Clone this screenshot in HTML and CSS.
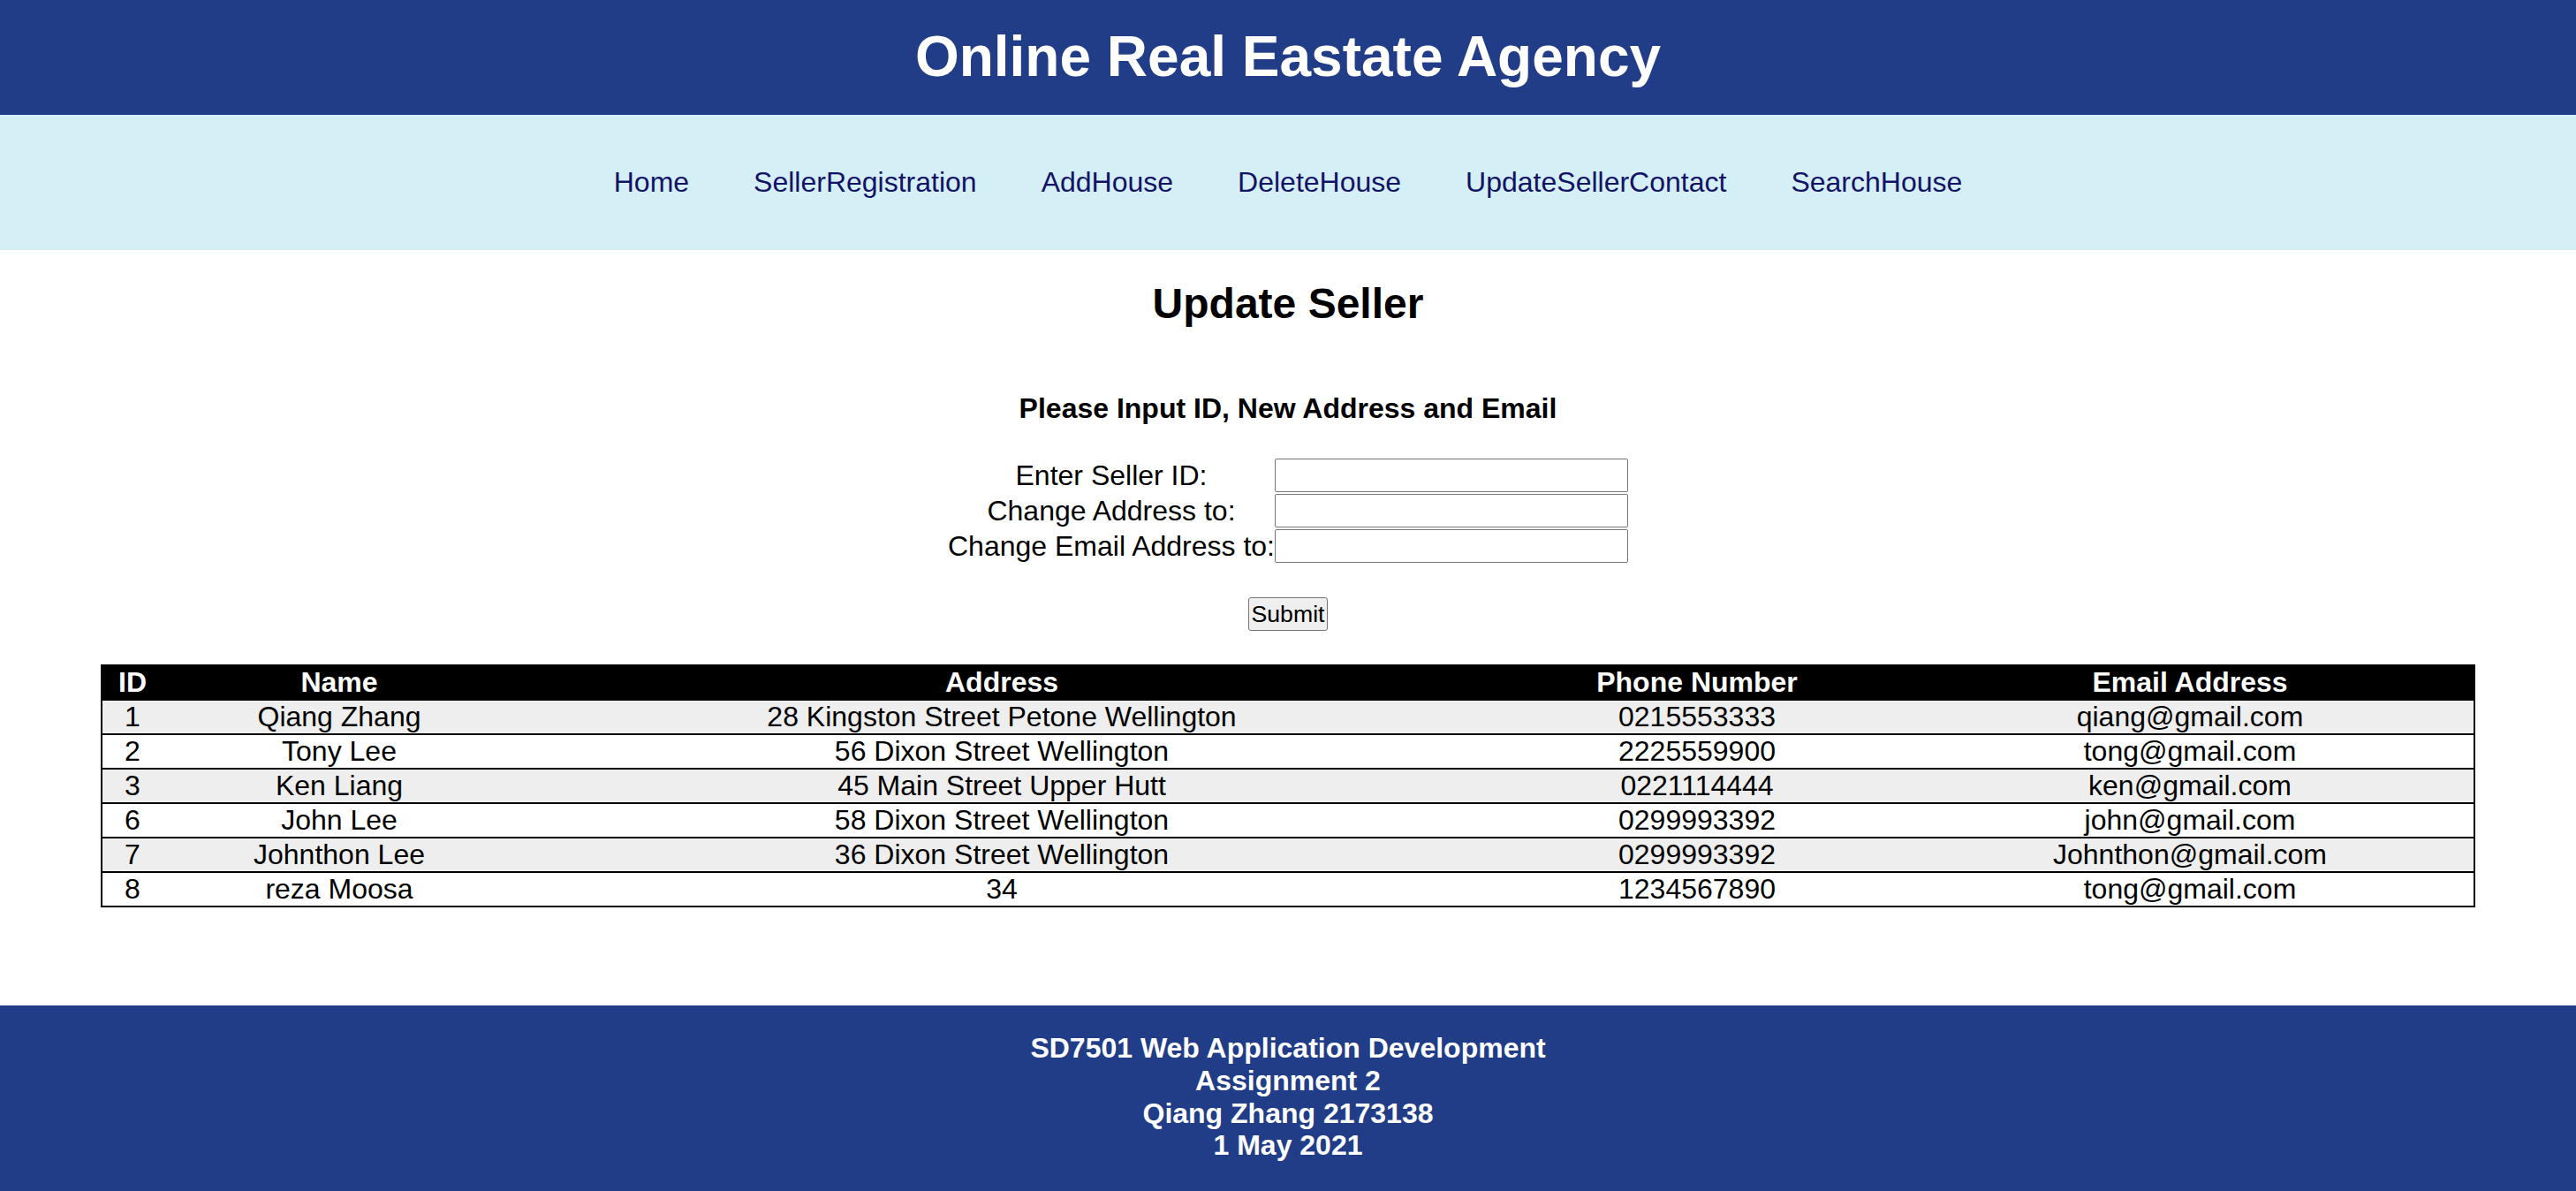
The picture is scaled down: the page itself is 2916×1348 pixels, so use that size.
FILE: index.html
```html
<!DOCTYPE html>
<html lang="en">
<head>
<meta charset="utf-8">
<title>Update Seller</title>
<link rel="stylesheet" href="styles.css">
</head>
<body>
<header class="site-header">
  <h1 class="site-title">Online Real Eastate Agency</h1>
</header>
<nav class="site-nav">
  <a href="#">Home</a>
  <a href="#">SellerRegistration</a>
  <a href="#">AddHouse</a>
  <a href="#">DeleteHouse</a>
  <a href="#">UpdateSellerContact</a>
  <a href="#">SearchHouse</a>
</nav>
<main class="content">
  <h2 class="page-title">Update Seller</h2>
  <form class="update-form">
    <h4 class="form-hint">Please Input ID, New Address and Email</h4>
    <table class="form-table">
      <tr><td class="form-label">Enter Seller ID:</td><td class="form-field"><input type="text" class="text-input"></td></tr>
      <tr><td class="form-label">Change Address to:</td><td class="form-field"><input type="text" class="text-input"></td></tr>
      <tr><td class="form-label">Change Email Address to:</td><td class="form-field"><input type="text" class="text-input"></td></tr>
    </table>
    <button type="button" class="submit-btn">Submit</button>
  </form>
  <table class="seller-table">
    <colgroup>
      <col class="col-id"><col class="col-name"><col class="col-address"><col class="col-phone"><col class="col-email">
    </colgroup>
    <thead>
      <tr><th>ID</th><th>Name</th><th>Address</th><th>Phone Number</th><th>Email Address</th></tr>
    </thead>
    <tbody>
      <tr><td>1</td><td>Qiang Zhang</td><td>28 Kingston Street Petone Wellington</td><td>0215553333</td><td>qiang@gmail.com</td></tr>
      <tr><td>2</td><td>Tony Lee</td><td>56 Dixon Street Wellington</td><td>2225559900</td><td>tong@gmail.com</td></tr>
      <tr><td>3</td><td>Ken Liang</td><td>45 Main Street Upper Hutt</td><td>0221114444</td><td>ken@gmail.com</td></tr>
      <tr><td>6</td><td>John Lee</td><td>58 Dixon Street Wellington</td><td>0299993392</td><td>john@gmail.com</td></tr>
      <tr><td>7</td><td>Johnthon Lee</td><td>36 Dixon Street Wellington</td><td>0299993392</td><td>Johnthon@gmail.com</td></tr>
      <tr><td>8</td><td>reza Moosa</td><td>34</td><td>1234567890</td><td>tong@gmail.com</td></tr>
    </tbody>
  </table>
</main>
<footer class="site-footer">
  <p class="footer-text">SD7501 Web Application Development<br>Assignment 2<br>Qiang Zhang 2173138<br>1 May 2021</p>
</footer>
</body>
</html>
```
FILE: styles.css
```css
* { box-sizing: border-box; }

html, body {
  margin: 0;
  padding: 0;
}

body {
  font-family: "Liberation Sans", Arial, sans-serif;
  font-size: 32px;
  color: #000;
  background: #fff;
}

.site-header {
  background: #223d87;
  padding: 27px 0 29px;
  text-align: center;
}

.site-title {
  margin: 0;
  font-size: 64px;
  line-height: 74px;
  font-weight: bold;
  color: #fff;
}

.site-nav {
  background: #d5eff6;
  padding: 58px 0;
  display: flex;
  justify-content: center;
  gap: 73px;
  line-height: 37px;
}

.site-nav a {
  color: #121266;
  text-decoration: none;
  font-size: 32px;
}

.content {
  display: flow-root;
  text-align: center;
}

.page-title {
  margin: 33px 0 0;
  font-size: 48px;
  line-height: 55px;
  font-weight: bold;
}

.update-form {
  margin: 0;
}

.form-hint {
  margin: 73px 0 0;
  font-size: 32px;
  line-height: 37px;
  font-weight: bold;
}

.form-table {
  margin: 37px auto 0;
  border-collapse: collapse;
}

.form-label {
  padding: 0;
  text-align: center;
  vertical-align: middle;
  line-height: 37px;
  white-space: nowrap;
}

.form-field {
  padding: 1px 0;
  vertical-align: middle;
}

.text-input {
  display: block;
  width: 400px;
  height: 38px;
  margin: 0;
  border: 1px solid #767676;
  border-radius: 2px;
  background: #fff;
  font-family: "Liberation Sans", Arial, sans-serif;
  font-size: 26.67px;
  padding: 2px 4px;
}

.submit-btn {
  display: block;
  margin: 38px auto 0;
  height: 38px;
  padding: 0 3px;
  border: 1px solid #767676;
  border-radius: 3px;
  background: #efefef;
  color: #000;
  font-family: "Liberation Sans", Arial, sans-serif;
  font-size: 26.67px;
  line-height: 34px;
}

.seller-table {
  width: 2688px;
  margin: 38px auto 111px;
  border: 2px solid #000;
  border-spacing: 0;
  table-layout: fixed;
}

.col-id { width: 68px; }
.col-name { width: 400px; }
.col-address { width: 1100px; }
.col-phone { width: 474px; }
.col-email { width: 642px; }

.seller-table th,
.seller-table td {
  padding: 0;
  height: 39px;
  line-height: 37px;
  text-align: center;
  border-bottom: 2px solid #000;
  white-space: nowrap;
}

.seller-table th {
  background: #000;
  color: #fff;
  font-weight: bold;
}

.seller-table tbody tr:nth-child(odd) {
  background: #eeeeee;
}

.seller-table tbody tr:last-child td {
  border-bottom: 0;
  height: 37px;
}

.site-footer {
  background: #223d87;
  display: flow-root;
  text-align: center;
}

.footer-text {
  margin: 30px 0 34px;
  color: #fff;
  font-weight: bold;
  font-size: 32px;
  line-height: 36.8px;
}
```
